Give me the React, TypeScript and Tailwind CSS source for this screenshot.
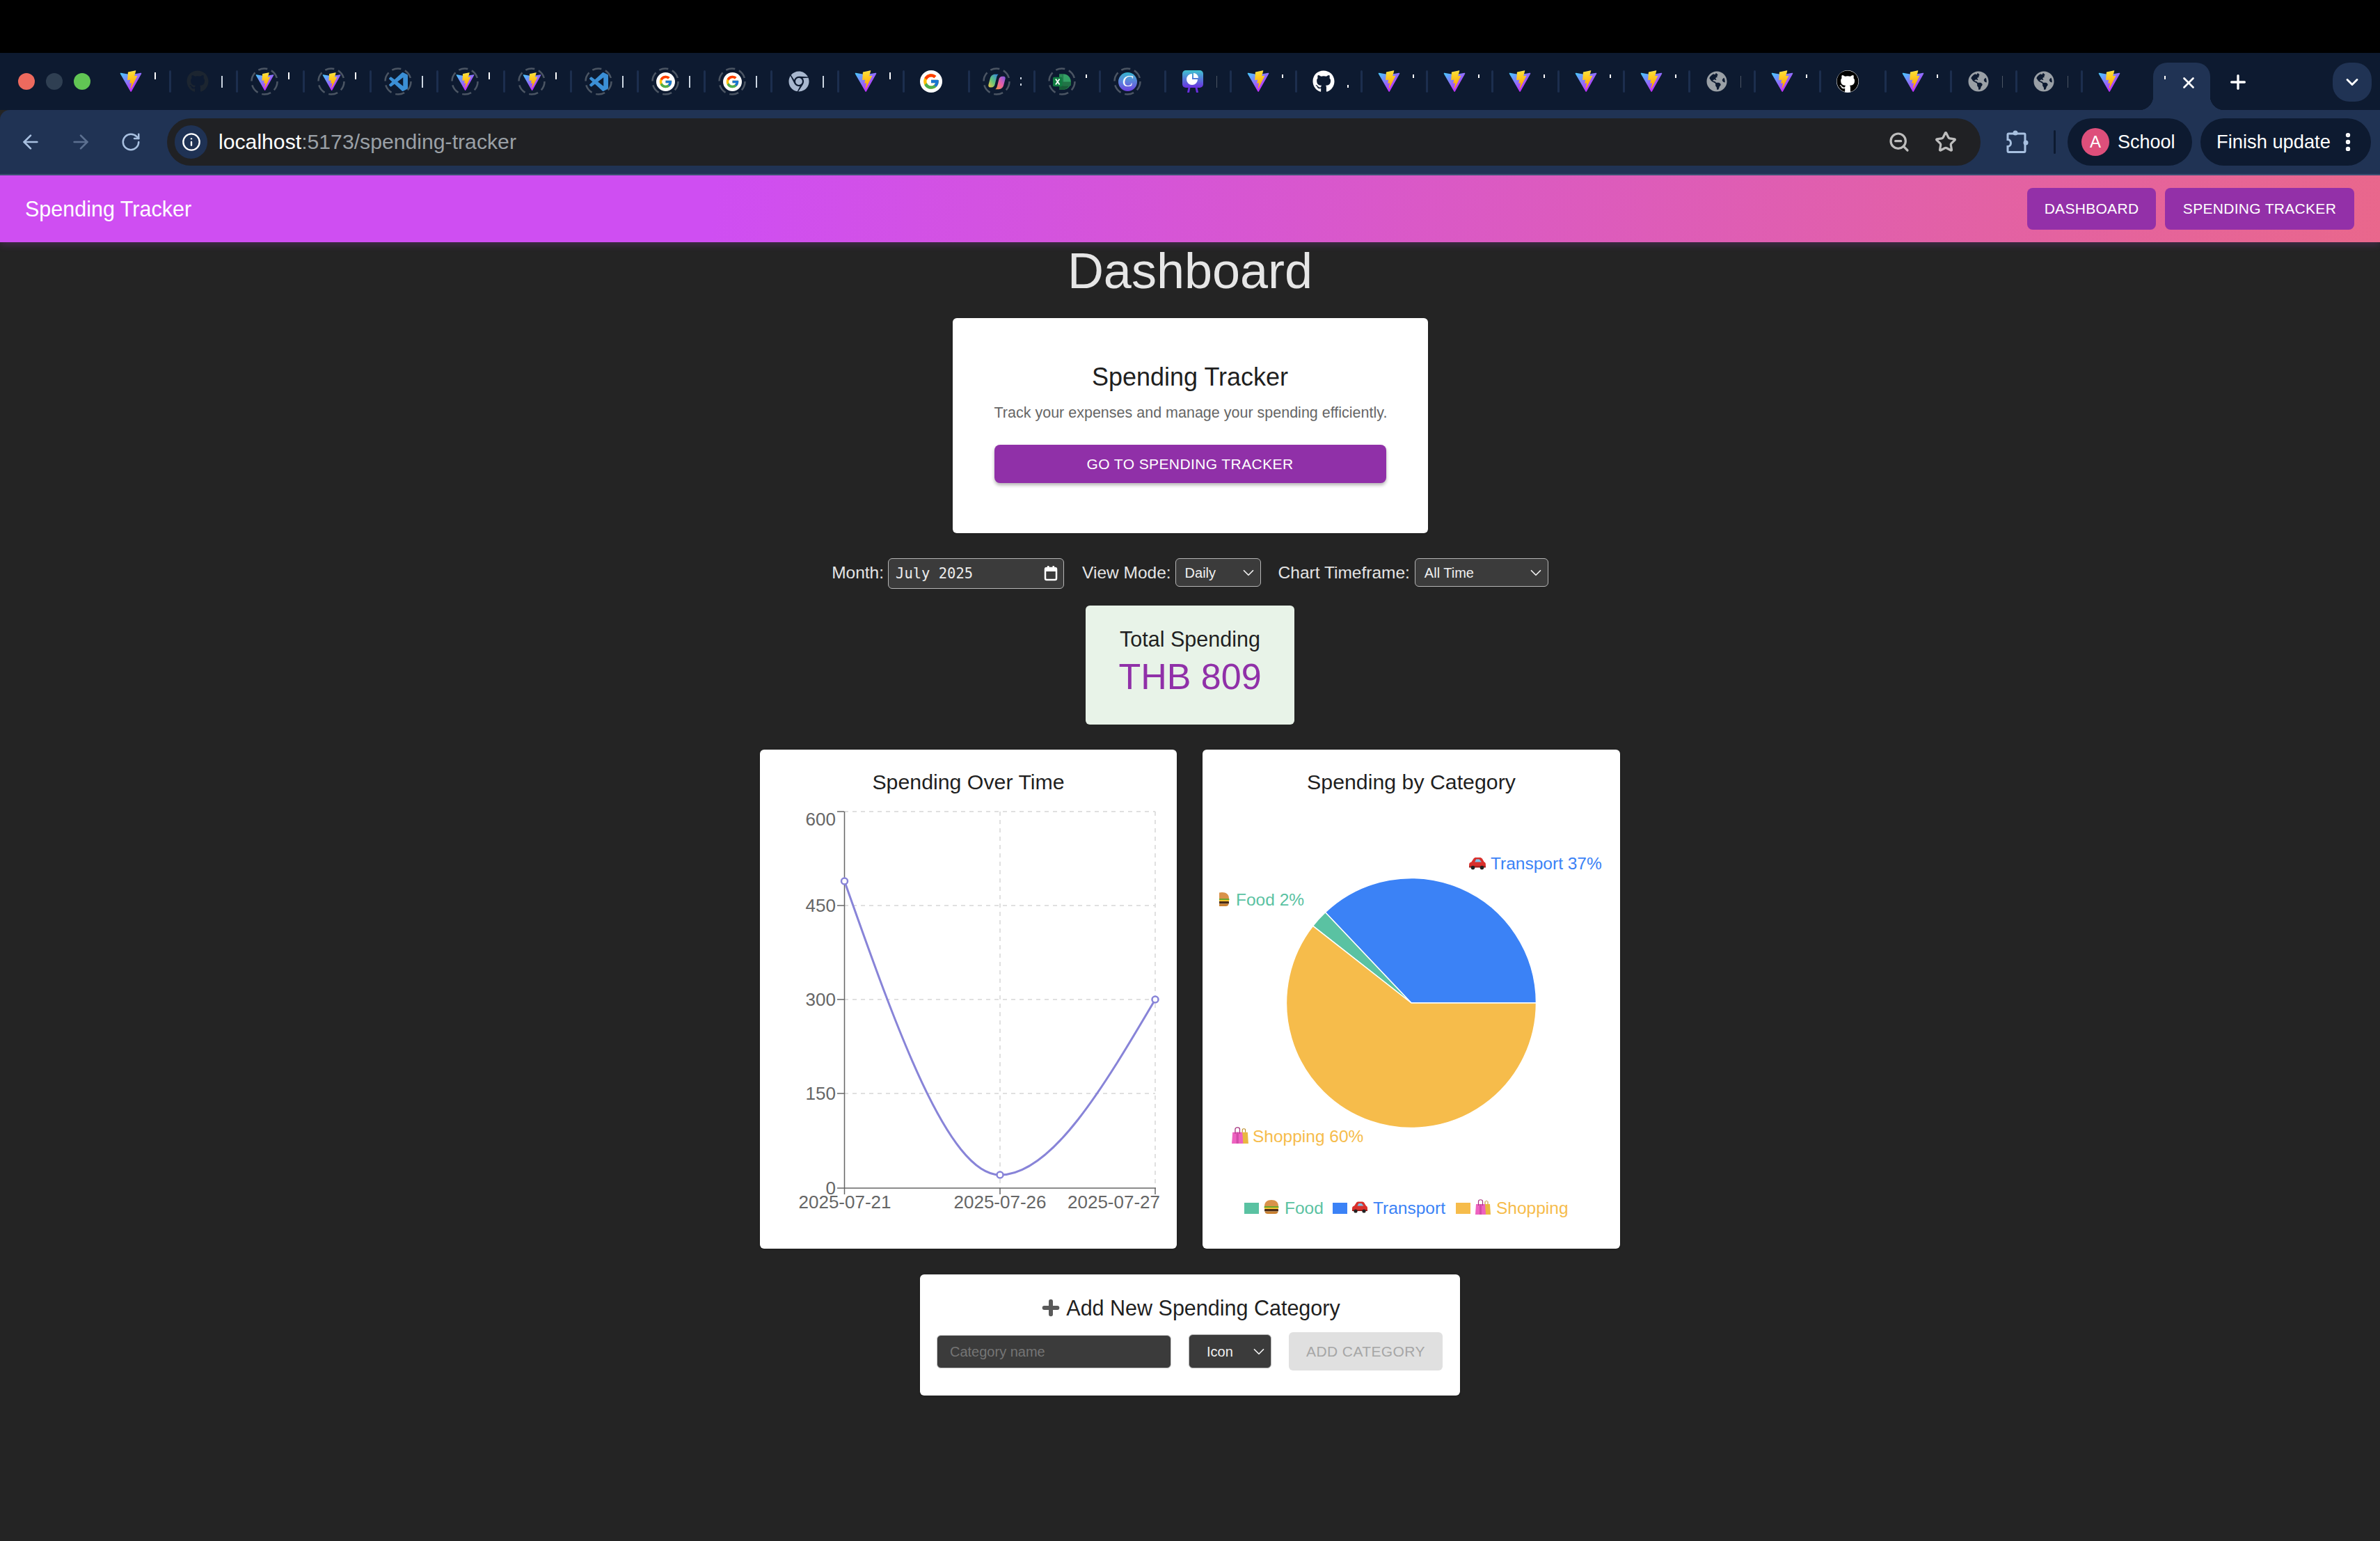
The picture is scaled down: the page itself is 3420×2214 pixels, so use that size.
import React, { useId } from 'react';
import {
  ArrowLeft,
  ArrowRight,
  ChevronDown,
  EllipsisVertical,
  Info,
  Plus,
  RotateCw,
  Star,
  X,
  ZoomOut,
} from 'lucide-react';
import { FaChrome, FaGithub, FaGlobeAmericas } from 'react-icons/fa';
import { FcGoogle } from 'react-icons/fc';

type IconKind =
  | 'vite'
  | 'githubDim'
  | 'github'
  | 'githubBlack'
  | 'vscode'
  | 'google'
  | 'chrome'
  | 'copilot'
  | 'excel'
  | 'canva'
  | 'slides'
  | 'globe';
type Mark = 'tick' | 'small' | 'bar' | 'dim' | 'dots' | 'low' | 'none';

interface Tab {
  icon: IconKind;
  ring?: boolean;
  mark: Mark;
}

const tabs: Tab[] = [
  { icon: 'vite', mark: 'tick' },
  { icon: 'githubDim', mark: 'bar' },
  { icon: 'vite', ring: true, mark: 'tick' },
  { icon: 'vite', ring: true, mark: 'tick' },
  { icon: 'vscode', ring: true, mark: 'bar' },
  { icon: 'vite', ring: true, mark: 'tick' },
  { icon: 'vite', ring: true, mark: 'tick' },
  { icon: 'vscode', ring: true, mark: 'bar' },
  { icon: 'google', ring: true, mark: 'bar' },
  { icon: 'google', ring: true, mark: 'bar' },
  { icon: 'chrome', mark: 'bar' },
  { icon: 'vite', mark: 'tick' },
  { icon: 'google', mark: 'none' },
  { icon: 'copilot', ring: true, mark: 'dots' },
  { icon: 'excel', ring: true, mark: 'small' },
  { icon: 'canva', ring: true, mark: 'none' },
  { icon: 'slides', mark: 'dim' },
  { icon: 'vite', mark: 'small' },
  { icon: 'github', mark: 'low' },
  { icon: 'vite', mark: 'small' },
  { icon: 'vite', mark: 'small' },
  { icon: 'vite', mark: 'small' },
  { icon: 'vite', mark: 'small' },
  { icon: 'vite', mark: 'small' },
  { icon: 'globe', mark: 'dim' },
  { icon: 'vite', mark: 'small' },
  { icon: 'githubBlack', mark: 'none' },
  { icon: 'vite', mark: 'small' },
  { icon: 'globe', mark: 'dim' },
  { icon: 'globe', mark: 'dim' },
  { icon: 'vite', mark: 'small' },
];

const ViteLogo = ({ size }: { size: number }) => {
  const id = useId();
  return (
    <svg width={size} height={size} viewBox="0 0 410 404" fill="none">
      <defs>
        <linearGradient id={`${id}a`} x1="6" y1="33" x2="235" y2="344" gradientUnits="userSpaceOnUse">
          <stop stopColor="#41D1FF" />
          <stop offset="1" stopColor="#BD34FE" />
        </linearGradient>
        <linearGradient id={`${id}b`} x1="194" y1="8" x2="236" y2="292" gradientUnits="userSpaceOnUse">
          <stop stopColor="#FFEA83" />
          <stop offset="0.08" stopColor="#FFDD35" />
          <stop offset="1" stopColor="#FFA800" />
        </linearGradient>
      </defs>
      <path
        d="M399.641 59.5246L215.643 388.545C211.844 395.338 202.084 395.378 198.228 388.618L10.5817 59.5563C6.38087 52.1896 12.6802 43.2665 21.0281 44.7586L205.223 77.6824C206.398 77.8924 207.601 77.8904 208.776 77.6763L389.119 44.8058C397.439 43.2894 403.768 52.1434 399.641 59.5246Z"
        fill={`url(#${id}a)`}
      />
      <path
        d="M292.965 1.5744L156.801 28.2552C154.563 28.6937 152.906 30.5903 152.771 32.8664L144.395 174.33C144.198 177.662 147.258 180.248 150.51 179.498L188.42 170.749C191.967 169.931 195.172 173.055 194.443 176.622L183.18 231.775C182.422 235.487 185.907 238.661 189.532 237.56L212.947 230.446C216.577 229.344 220.065 232.527 219.297 236.242L201.398 322.875C200.278 328.294 207.486 331.249 210.492 326.603L212.5 323.5L323.454 102.072C325.312 98.3645 322.108 94.137 318.036 94.9228L279.014 102.454C275.347 103.161 272.227 99.746 273.262 96.1583L298.731 7.86689C299.767 4.27314 296.636 0.855181 292.965 1.5744Z"
        fill={`url(#${id}b)`}
      />
    </svg>
  );
};

const VscodeLogo = ({ size }: { size: number }) => (
  <svg width={size} height={size} viewBox="0 0 24 24">
    <path
      fill="#3b8fd6"
      d="M23.15 2.587L18.21.21a1.494 1.494 0 0 0-1.705.29l-9.46 8.63-4.12-3.128a.999.999 0 0 0-1.276.057L.327 7.261A1 1 0 0 0 .326 8.74L3.899 12 .326 15.26a1 1 0 0 0 .001 1.479L1.65 17.94a.999.999 0 0 0 1.276.057l4.12-3.128 9.46 8.63a1.492 1.492 0 0 0 1.704.29l4.942-2.377A1.5 1.5 0 0 0 24 20.06V3.939a1.5 1.5 0 0 0-.85-1.352zm-5.146 14.861L10.826 12l7.178-5.448v10.896z"
    />
  </svg>
);

const CopilotLogo = ({ size }: { size: number }) => {
  const id = useId();
  return (
    <svg width={size} height={size} viewBox="0 0 24 24">
      <defs>
        <linearGradient id={`${id}a`} x1="0" y1="1" x2="1" y2="0">
          <stop stopColor="#f6c945" />
          <stop offset="0.45" stopColor="#62c47a" />
          <stop offset="1" stopColor="#2f7fe8" />
        </linearGradient>
        <linearGradient id={`${id}b`} x1="1" y1="0" x2="0" y2="1">
          <stop stopColor="#7a5be8" />
          <stop offset="0.5" stopColor="#e85fa8" />
          <stop offset="1" stopColor="#f59a3c" />
        </linearGradient>
      </defs>
      <path
        d="M9.500 2.500h4.500c-1.500 1-2 2.500-2.500 4.500l-2 8c-.6 2.500-2 4-4.500 4H3.500C1.500 19 .8 17.500 1.300 15.500l2-7.500C4.300 4.500 6.500 2.500 9.500 2.500z"
        fill={`url(#${id}a)`}
      />
      <path
        d="M14.500 21.500H10c1.500-1 2-2.500 2.500-4.500l2-8c.6-2.500 2-4 4.500-4h1.500c2 0 2.700 1.500 2.200 3.500l-2 7.500c-1 3.500-3.200 5.500-6.200 5.500z"
        fill={`url(#${id}b)`}
      />
    </svg>
  );
};

const ExcelLogo = ({ size }: { size: number }) => (
  <svg width={size} height={size} viewBox="0 0 24 24">
    <path d="M10 2a10 10 0 0 1 0 20z" fill="#33a165" transform="translate(3 0)" />
    <path d="M13 2h-5v20h5z" fill="#2a8a55" />
    <path d="M8 12h15v5H8z" fill="#217346" />
    <path d="M8 17h13c-2 3-5 5-8 5H8z" fill="#185c37" />
    <rect x="0" y="6" width="12" height="12" rx="1.500" fill="#107c41" />
    <path d="M3.500 8.500l5 7M8.500 8.500l-5 7" stroke="#fff" strokeWidth="1.600" />
  </svg>
);

const SlidesLogo = ({ size }: { size: number }) => {
  const id = useId();
  return (
    <svg width={size} height={size} viewBox="0 0 32 32">
      <defs>
        <linearGradient id={id} x1="0" y1="0" x2="0" y2="1">
          <stop stopColor="#3fc4d0" />
          <stop offset="1" stopColor="#6a2fe0" />
        </linearGradient>
      </defs>
      <path d="M10 22l-2 10h3l2-10zM22 22l2 10h-3l-2-10z" fill="#6a2fe0" />
      <rect x="1" y="0" width="30" height="25" rx="5" fill={`url(#${id})`} />
      <path d="M15 5a8 8 0 1 0 8 8h-8z" fill="#fff" />
      <path d="M17 4a7 7 0 0 1 7 7h-7z" fill="#fff" />
    </svg>
  );
};

const ExtensionIcon = () => (
  <svg width="34" height="34" viewBox="0 0 34 34" fill="none">
    <path
      d="M6.500 6H28.500a1.500 1.500 0 0 1 1.500 1.500V31a1.500 1.500 0 0 1-1.500 1.500H6.500A1.500 1.500 0 0 1 5 31V24.500c3 0 4.500-2.500 4.500-5s-1.500-5-4.500-5V7.500A1.500 1.500 0 0 1 6.500 6z"
      transform="translate(-1 -1)"
      stroke="#a8c0e0"
      strokeWidth="3"
    />
    <circle cx="15" cy="4" r="3.500" fill="#a8c0e0" />
    <circle cx="30" cy="18" r="3.500" fill="#a8c0e0" />
  </svg>
);

const TabGlyph = ({ kind, size }: { kind: IconKind; size: number }) => {
  switch (kind) {
    case 'vite':
      return <ViteLogo size={size} />;
    case 'vscode':
      return <VscodeLogo size={size} />;
    case 'githubDim':
      return <FaGithub size={size} className="text-[#1c2530]" />;
    case 'github':
      return <FaGithub size={size} className="text-white" />;
    case 'githubBlack':
      return (
        <span className="flex items-center justify-center rounded-full bg-white">
          <FaGithub size={size} className="text-black" />
        </span>
      );
    case 'google':
      return (
        <span className="flex items-center justify-center rounded-full bg-white p-[3px]">
          <FcGoogle size={size - 6} />
        </span>
      );
    case 'chrome':
      return <FaChrome size={size - 2} className="text-[#a9b8cf]" />;
    case 'copilot':
      return <CopilotLogo size={size} />;
    case 'excel':
      return <ExcelLogo size={size} />;
    case 'canva':
      return (
        <span
          className="flex items-center justify-center rounded-full bg-linear-to-b from-[#2fb5cf] to-[#6b3de0] font-['Liberation_Serif',serif] text-white italic"
          style={{ width: size, height: size, fontSize: size * 0.85 }}
        >
          C
        </span>
      );
    case 'slides':
      return <SlidesLogo size={size} />;
    case 'globe':
      return <FaGlobeAmericas size={size - 2} className="text-[#9aa0a6]" />;
  }
};

const TabMark = ({ mark }: { mark: Mark }) => {
  if (mark === 'tick') return <span className="mb-[16px] ml-[14px] h-[10px] w-[2px] bg-white" />;
  if (mark === 'small') return <span className="mb-[16px] ml-[14px] h-[5px] w-[2px] bg-white" />;
  if (mark === 'bar') return <span className="ml-[14px] h-[17px] w-[2px] bg-[#cbd5e1]" />;
  if (mark === 'dim') return <span className="ml-[14px] h-[17px] w-[1px] bg-[#4b5563]" />;
  if (mark === 'low') return <span className="mt-[14px] ml-[14px] h-[4px] w-[2px] bg-white" />;
  if (mark === 'dots')
    return (
      <span className="ml-[14px] flex flex-col gap-[6px]">
        <span className="h-[3px] w-[2px] bg-[#cbd5e1]" />
        <span className="h-[3px] w-[2px] bg-[#cbd5e1]" />
      </span>
    );
  return null;
};

const TabItem = ({ tab, widthClass }: { tab: Tab; widthClass: string }) => (
  <div className={`flex h-[68px] shrink-0 items-center pl-[18px] ${widthClass}`}>
    <div className="relative flex h-[40px] w-[40px] shrink-0 items-center justify-center">
      {tab.ring && (
        <svg className="absolute inset-0" width="40" height="40" viewBox="0 0 40 40" fill="none">
          <circle cx="20" cy="20" r="18.500" stroke="#4b5563" strokeWidth="2.500" strokeDasharray="13.400 6" />
        </svg>
      )}
      <TabGlyph kind={tab.icon} size={tab.ring ? 27 : 32} />
    </div>
    <TabMark mark={tab.mark} />
    <span className="ml-auto h-[32px] w-[3px] rounded-sm bg-[#1c2e4e]" />
  </div>
);

const TabStrip = () => (
  <div className="flex h-[82px] items-end bg-[#0d1a30]">
    <div className="flex h-[82px] w-[150px] shrink-0 items-center gap-[16px] pl-[26px]">
      <span className="h-[24px] w-[24px] rounded-full bg-[#ed6a5e]" />
      <span className="h-[24px] w-[24px] rounded-full bg-[#2f3f52]" />
      <span className="h-[24px] w-[24px] rounded-full bg-[#61c554]" />
    </div>
    <div className="flex h-[82px] items-center">
      {tabs.map((tab, i) => (
        <TabItem
          key={i}
          tab={tab}
          widthClass={i < 11 ? 'w-[96px]' : i < 30 ? 'w-[94.05px]' : 'w-[62px]'}
        />
      ))}
    </div>
    <div className="relative ml-[39px] flex h-[68px] w-[82px] shrink-0 items-center rounded-t-[20px] bg-[#203354] pb-[10px] pl-[16px]">
      <span className="mb-[16px] h-[5px] w-[2px] bg-white" />
      <X size={26} strokeWidth={2.5} className="ml-[20px] text-white" />
      <span className="absolute bottom-0 -left-[20px] h-[20px] w-[20px] bg-[radial-gradient(circle_at_0_0,#0d1a30_20px,#203354_20.500px)]" />
      <span className="absolute -right-[20px] bottom-0 h-[20px] w-[20px] bg-[radial-gradient(circle_at_100%_0,#0d1a30_20px,#203354_20.500px)]" />
    </div>
    <div className="flex h-[82px] flex-1 items-start pt-[14px]">
      <div className="flex h-[56px] w-[80px] items-center justify-center">
        <Plus size={32} strokeWidth={2.5} className="text-white" />
      </div>
      <div className="ml-[96px] flex h-[56px] w-[56px] items-center justify-center rounded-[24px] bg-[#203354]">
        <ChevronDown size={28} strokeWidth={2.5} className="text-white" />
      </div>
    </div>
  </div>
);

const Toolbar = () => (
  <div className="flex h-[94px] items-start rounded-tl-[14px] border-b-2 border-[#38506f] bg-[#203354] pt-[12px] text-white">
    <div className="flex h-[68px] w-[240px] shrink-0 items-center pl-[28px]">
      <ArrowLeft size={32} className="text-[#a8c0e0]" />
      <ArrowRight size={32} className="ml-[40px] text-[#5c7090]" />
      <RotateCw size={30} className="ml-[41px] text-[#a8c0e0]" />
    </div>
    <div className="flex h-[68px] w-[2606px] shrink-0 items-center rounded-full bg-[#202124] pr-[34px] pl-[11px]">
      <div className="flex h-[48px] w-[47px] items-center justify-center rounded-full bg-[#1f3254]">
        <Info size={28} className="text-white" />
      </div>
      <span className="ml-[16px] text-[30.200px] leading-none text-white">
        localhost<span className="text-[#9aa0a6]">:5173/spending-tracker</span>
      </span>
      <ZoomOut size={32} strokeWidth={2.400} className="ml-auto -translate-x-[2px] text-[#bdbdbd]" />
      <Star size={32} strokeWidth={2.400} className="ml-[33px] text-[#bdbdbd]" />
    </div>
    <div className="flex h-[68px] items-center">
      <div className="ml-[35px]">
        <ExtensionIcon />
      </div>
      <span className="ml-[36px] h-[34px] w-[3px] rounded-full bg-[#0d1a30]" />
      <div className="ml-[17px] flex h-[68px] w-[179px] items-center rounded-full bg-[#0d1a30] pl-[20px]">
        <span className="flex h-[40px] w-[40px] items-center justify-center rounded-full bg-[#de4f7b] text-[24px] leading-none">
          A
        </span>
        <span className="ml-[12px] text-[27px] leading-none">School</span>
      </div>
      <div className="ml-[12px] flex h-[68px] w-[245px] items-center rounded-full bg-[#0d1a30] pl-[23px]">
        <span className="text-[27.300px] leading-none">Finish update</span>
        <EllipsisVertical size={34} strokeWidth={2.500} className="ml-[8px]" />
      </div>
    </div>
  </div>
);

const NavBar = () => (
  <header className="relative z-10 flex h-[96px] items-center bg-linear-[95deg] from-[#cf4ef2] from-30% to-[#e9678c] pr-[37px] pl-[36px] text-white shadow-[0_4px_10px_rgba(207,78,242,0.18)]">
    <span className="text-[30.500px] leading-none">Spending Tracker</span>
    <button className="ml-auto flex h-[60px] w-[185px] items-center justify-center rounded-[8px] bg-[#9330a8] text-[21px] tracking-[0.3px]">
      DASHBOARD
    </button>
    <button className="ml-[13px] flex h-[60px] w-[272px] items-center justify-center rounded-[8px] bg-[#9330a8] text-[21px] tracking-[0.3px]">
      SPENDING TRACKER
    </button>
  </header>
);

const FakeSelect = ({
  label,
  widthClass,
  heightClass = 'h-[41px]',
}: {
  label: string;
  widthClass: string;
  heightClass?: string;
}) => (
  <div
    className={`flex items-center justify-between rounded-[6px] border border-[#b5b5b5] bg-[#3b3b3b] pr-[4px] pl-[13px] text-[20px] text-[#f0f0f0] ${widthClass} ${heightClass}`}
  >
    <span className="leading-none">{label}</span>
    <ChevronDown size={26} strokeWidth={1.600} />
  </div>
);

const Filters = () => (
  <div className="mt-[36px] flex items-start text-[24.500px] leading-[41px] text-[#e4e4e4]">
    <span>Month:</span>
    <div className="ml-[6px] flex h-[44px] w-[253px] items-center justify-between rounded-[6px] border-[1.5px] border-[#b5b5b5] bg-[#3b3b3b] pr-[8px] pl-[10px] text-[#ececec]">
      <span className="font-['DejaVu_Sans_Mono',monospace] text-[20.500px] leading-none">July 2025</span>
      <svg width="20" height="22" viewBox="0 0 20 22">
        <rect x="2" y="3" width="16" height="17" rx="2" fill="none" stroke="#fff" strokeWidth="2.500" />
        <rect x="2" y="3" width="16" height="5" fill="#fff" />
        <rect x="5" y="0" width="2.500" height="4" fill="#fff" />
        <rect x="12.500" y="0" width="2.500" height="4" fill="#fff" />
      </svg>
    </div>
    <span className="ml-[26px]">View Mode:</span>
    <div className="ml-[6px]">
      <FakeSelect label="Daily" widthClass="w-[123px]" />
    </div>
    <span className="ml-[25px]">Chart Timeframe:</span>
    <div className="ml-[7px]">
      <FakeSelect label="All Time" widthClass="w-[192px]" />
    </div>
  </div>
);

const Burger = ({
  x,
  y,
  w = 26,
  h = 26,
  view = '0 0 24 24',
}: {
  x: number;
  y: number;
  w?: number;
  h?: number;
  view?: string;
}) => (
  <svg x={x} y={y} width={w} height={h} viewBox={view}>
    <path d="M2 11c0-6 4-9 10-9s10 3 10 9z" fill="#d9924a" />
    <rect x="1.500" y="11" width="21" height="2.500" rx="1" fill="#6aa62e" />
    <rect x="2" y="13" width="20" height="2.500" fill="#f4c430" />
    <rect x="2" y="15" width="20" height="3.500" rx="1" fill="#4a2c17" />
    <path d="M2.500 18.500h19c0 2.500-2 3.500-4 3.500h-11c-2 0-4-1-4-3.500z" fill="#c9802f" />
  </svg>
);

const Car = ({ x, y, w = 26, h = 26 }: { x: number; y: number; w?: number; h?: number }) => (
  <svg x={x} y={y} width={w} height={h} viewBox="0 0 24 24">
    <path
      d="M1 17v-3c0-2 1-3 3-3.500L7 6c.6-1 1.500-1.500 3-1.500h5c1.500 0 2.500.5 3.300 1.500l2.700 4.500c1.500.5 2 1.500 2 3.500v3z"
      fill="#d9302c"
    />
    <path d="M8.500 10.500L10.300 7h4.200l3 3.500z" fill="#7fc4e8" />
    <rect x="1" y="16" width="22" height="2" fill="#a01f1c" />
    <circle cx="6" cy="18" r="2.600" fill="#222" />
    <circle cx="18" cy="18" r="2.600" fill="#222" />
  </svg>
);

const Bags = ({ x, y, w = 26, h = 26 }: { x: number; y: number; w?: number; h?: number }) => (
  <svg x={x} y={y} width={w} height={h} viewBox="0 0 24 24" fill="none">
    <path d="M13 8h9l1 15h-10z" fill="#e9b840" />
    <path d="M15 8V5c0-2 4-2 4 0v3" stroke="#b98a1f" />
    <path d="M2 8h13l1 15H1z" fill="#ee62c0" />
    <rect x="7" y="8" width="3" height="15" fill="#d24ba8" />
    <path d="M5.500 10V4c0-3 6-3 6 0v6" stroke="#a6347f" strokeWidth="1.200" />
  </svg>
);

const LineChart = () => {
  const gridColor = '#d6d6d6';
  const axisColor = '#666666';
  const ys: [number, string][] = [
    [1177, '600'],
    [1301, '450'],
    [1436, '300'],
    [1571, '150'],
    [1707, '0'],
  ];
  return (
    <svg width="599" height="652" viewBox="1092 1142 599 652" fontSize="26" fill="#666666">
      {[1166, 1301, 1436, 1571].map((y) => (
        <line key={y} x1="1213" x2="1660" y1={y} y2={y} stroke={gridColor} strokeWidth="1.500" strokeDasharray="6 6" />
      ))}
      {[1437, 1660].map((x) => (
        <line key={x} x1={x} x2={x} y1="1166" y2="1707" stroke={gridColor} strokeWidth="1.500" strokeDasharray="6 6" />
      ))}
      <line x1="1213.500" x2="1213.500" y1="1166" y2="1707" stroke={axisColor} strokeWidth="1.500" />
      <line x1="1213" x2="1661" y1="1707" y2="1707" stroke={axisColor} strokeWidth="1.500" />
      {[1166, 1301, 1436, 1571, 1707].map((y) => (
        <line key={y} x1="1203" x2="1213" y1={y} y2={y} stroke={axisColor} strokeWidth="1.500" />
      ))}
      {[1213.5, 1437, 1660].map((x) => (
        <line key={x} x1={x} x2={x} y1="1707" y2="1716" stroke={axisColor} strokeWidth="1.500" />
      ))}
      {ys.map(([y, t]) => (
        <text key={t} x="1201" y={y} textAnchor="end" dominantBaseline="central">
          {t}
        </text>
      ))}
      <text x="1214" y="1727" textAnchor="middle" dominantBaseline="central">2025-07-21</text>
      <text x="1437" y="1727" textAnchor="middle" dominantBaseline="central">2025-07-26</text>
      <text x="1667" y="1727" textAnchor="end" dominantBaseline="central">2025-07-27</text>
      <path
        d="M1213.5 1266C1288 1477 1362.500 1688 1437 1688C1511.300 1688 1585.700 1562 1660 1436"
        fill="none"
        stroke="#8884d8"
        strokeWidth="3"
      />
      {[
        [1213.5, 1266],
        [1437, 1688],
        [1660, 1436],
      ].map(([cx, cy]) => (
        <circle key={cx} cx={cx} cy={cy} r="4.500" fill="#fff" stroke="#8884d8" strokeWidth="2.500" />
      ))}
    </svg>
  );
};

const CX = 2028;
const CY = 1441;
const R = 179.5;

const slice = (from: number, to: number) => {
  const point = (deg: number) => {
    const rad = (deg * Math.PI) / 180;
    return `${CX + R * Math.cos(rad)} ${CY - R * Math.sin(rad)}`;
  };
  const large = to - from > 180 ? 1 : 0;
  return `M${CX} ${CY}L${point(from)}A${R} ${R} 0 ${large} 0 ${point(to)}Z`;
};

const PieChart = () => {
  const green = '#5ac2a2';
  const blue = '#3b82f6';
  const gold = '#f6bc4b';
  return (
    <svg width="600" height="652" viewBox="1728 1142 600 652" fontSize="24.500">
      <path d={slice(0, 133.5)} fill={blue} stroke="#fff" strokeWidth="1.500" />
      <path d={slice(133.5, 141.95)} fill={green} stroke="#fff" strokeWidth="1.500" />
      <path d={slice(141.95, 360)} fill={gold} stroke="#fff" strokeWidth="1.500" />

      <Car x={2110} y={1227} />
      <text x="2142" y="1240" fill={blue} dominantBaseline="central">Transport 37%</text>
      <Burger x={1752} y={1280} w={16} h={24} view="8 0 16 24" />
      <text x="1776" y="1292" fill={green} dominantBaseline="central">Food 2%</text>
      <Bags x={1769} y={1618} />
      <text x="1800" y="1632" fill={gold} dominantBaseline="central">Shopping 60%</text>

      <rect x="1788" y="1728" width="21" height="16" fill={green} />
      <Burger x={1815} y={1722} w={24} h={24} />
      <text x="1846" y="1735" fill={green} dominantBaseline="central">Food</text>
      <rect x="1915" y="1728" width="21" height="16" fill={blue} />
      <Car x={1942} y={1722} w={24} h={24} />
      <text x="1973" y="1735" fill={blue} dominantBaseline="central">Transport</text>
      <rect x="2092" y="1728" width="21" height="16" fill={gold} />
      <Bags x={2119} y={1722} w={24} h={24} />
      <text x="2150" y="1735" fill={gold} dominantBaseline="central">Shopping</text>
    </svg>
  );
};

const ChartCard = ({
  title,
  widthClass,
  children,
}: {
  title: string;
  widthClass: string;
  children: React.ReactNode;
}) => (
  <div className={`h-[717px] rounded-[6px] bg-white pt-[29px] shadow-sm ${widthClass}`}>
    <h3 className="text-center text-[30.300px] leading-[36px] text-[#1f1f1f]">{title}</h3>
    {children}
  </div>
);

const App: React.FC = () => {
  return (
    <div className="flex min-h-[2214px] w-[3420px] flex-col bg-[#242424] [font-family:'Liberation_Sans',Arial,sans-serif]">
      <div className="h-[76px] bg-black" />
      <TabStrip />
      <Toolbar />
      <NavBar />
      <main className="flex flex-col items-center">
        <h1 className="text-[72px] leading-[82px] text-[#e6e6e6]">Dashboard</h1>

        <div className="mt-[27px] flex h-[309px] w-[683px] flex-col rounded-[6px] bg-white px-[60px] pt-[64px] text-center shadow-sm">
          <h2 className="text-[36px] leading-[42px] text-[#1f1f1f]">Spending Tracker</h2>
          <p className="mt-[16px] text-[21.500px] leading-[28px] whitespace-nowrap text-[#666666]">
            Track your expenses and manage your spending efficiently.
          </p>
          <button className="mt-[32px] flex h-[55px] items-center justify-center rounded-[8px] bg-[#9030a8] text-[21px] tracking-[0.4px] text-white shadow-[0_3px_5px_rgba(0,0,0,0.3)]">
            GO TO SPENDING TRACKER
          </button>
        </div>

        <Filters />

        <div className="mt-[24px] h-[171px] w-[300px] rounded-[6px] bg-[#e8f3e8] pt-[30px] text-center">
          <div className="text-[30.500px] leading-[36px] text-[#1f1f1f]">Total Spending</div>
          <div className="mt-[6px] text-[52px] leading-[60px] text-[#9030a8]">THB 809</div>
        </div>

        <div className="mt-[36px] flex gap-[37px]">
          <ChartCard title="Spending Over Time" widthClass="w-[599px]">
            <LineChart />
          </ChartCard>
          <ChartCard title="Spending by Category" widthClass="w-[600px]">
            <PieChart />
          </ChartCard>
        </div>

        <div className="mt-[37px] h-[174px] w-[776px] rounded-[6px] bg-white px-[24px] pt-[30px] shadow-sm">
          <h3 className="flex items-center justify-center text-[30.500px] leading-[36px] text-[#1f1f1f]">
            <Plus size={32} strokeWidth={4.500} className="mr-[6px] text-[#5a5a5a]" />
            Add New Spending Category
          </h3>
          <div className="mt-[17px] flex items-center gap-[25px]">
            <div className="flex h-[48px] w-[337px] items-center rounded-[6px] border border-[#c8c8c8] bg-[#3b3b3b] pl-[18px] text-[20px] text-[#757575]">
              Category name
            </div>
            <FakeSelect label="Icon" widthClass="w-[119px] pl-[25px]" heightClass="h-[49px]" />
            <button className="flex h-[55px] w-[221px] items-center justify-center rounded-[6px] bg-[#e0e0e0] text-[21px] tracking-[0.4px] text-[#a6a6a6]">
              ADD CATEGORY
            </button>
          </div>
        </div>
      </main>
    </div>
  );
};

export default App;
